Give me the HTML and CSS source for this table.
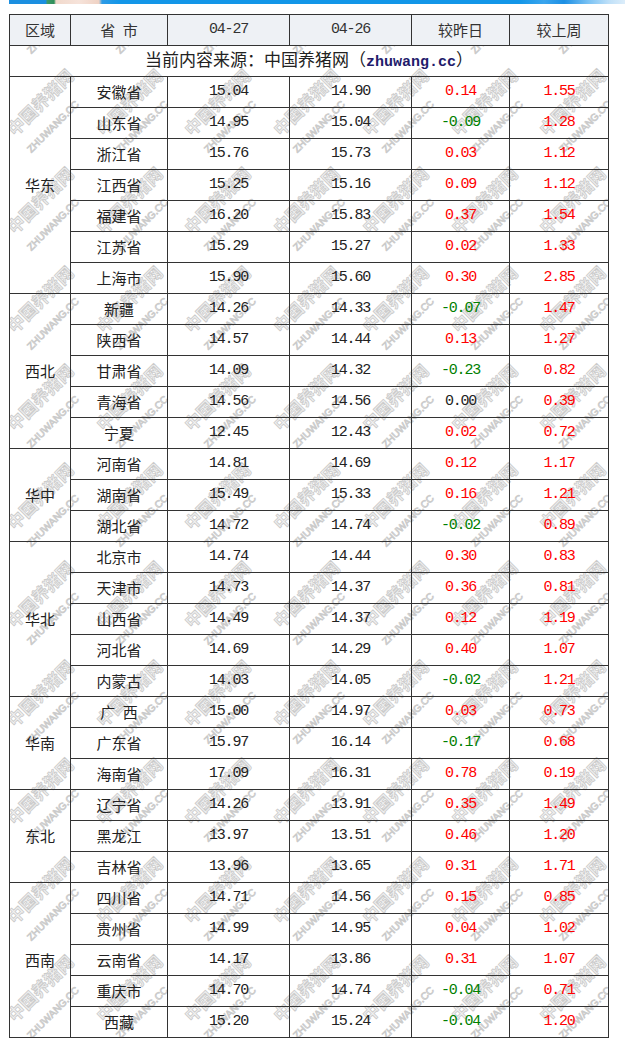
FILE: index.html
```html
<!DOCTYPE html>
<html lang="zh-CN">
<head>
<meta charset="utf-8">
<title>生猪价格</title>
<link rel="stylesheet" href="styles.css">
</head>
<body>
<div class="page">
  <div class="banner"></div>
  <div class="table-wrap">
    <div class="watermark" aria-hidden="true"></div>
    <table class="price-table">
      <colgroup>
        <col class="c-region"><col class="c-prov"><col class="c-num"><col class="c-num"><col class="c-chg"><col class="c-week">
      </colgroup>
      <thead>
        <tr><th>区域</th><th>省&ensp;市</th><th class="num">04-27</th><th class="num">04-26</th><th>较昨日</th><th>较上周</th></tr>
      </thead>
      <tbody>
        <tr class="source"><td colspan="6">当前内容来源：中国养猪网（<b class="site">zhuwang.cc</b>）</td></tr>

        <tr><td rowspan="7" class="region">华东</td><td>安徽省</td><td class="num">15.04</td><td class="num">14.90</td><td class="num up">0.14</td><td class="num up">1.55</td></tr>
        <tr><td>山东省</td><td class="num">14.95</td><td class="num">15.04</td><td class="num down">-0.09</td><td class="num up">1.28</td></tr>
        <tr><td>浙江省</td><td class="num">15.76</td><td class="num">15.73</td><td class="num up">0.03</td><td class="num up">1.12</td></tr>
        <tr><td>江西省</td><td class="num">15.25</td><td class="num">15.16</td><td class="num up">0.09</td><td class="num up">1.12</td></tr>
        <tr><td>福建省</td><td class="num">16.20</td><td class="num">15.83</td><td class="num up">0.37</td><td class="num up">1.54</td></tr>
        <tr><td>江苏省</td><td class="num">15.29</td><td class="num">15.27</td><td class="num up">0.02</td><td class="num up">1.33</td></tr>
        <tr><td>上海市</td><td class="num">15.90</td><td class="num">15.60</td><td class="num up">0.30</td><td class="num up">2.85</td></tr>

        <tr><td rowspan="5" class="region">西北</td><td>新疆</td><td class="num">14.26</td><td class="num">14.33</td><td class="num down">-0.07</td><td class="num up">1.47</td></tr>
        <tr><td>陕西省</td><td class="num">14.57</td><td class="num">14.44</td><td class="num up">0.13</td><td class="num up">1.27</td></tr>
        <tr><td>甘肃省</td><td class="num">14.09</td><td class="num">14.32</td><td class="num down">-0.23</td><td class="num up">0.82</td></tr>
        <tr><td>青海省</td><td class="num">14.56</td><td class="num">14.56</td><td class="num">0.00</td><td class="num up">0.39</td></tr>
        <tr><td>宁夏</td><td class="num">12.45</td><td class="num">12.43</td><td class="num up">0.02</td><td class="num up">0.72</td></tr>

        <tr><td rowspan="3" class="region">华中</td><td>河南省</td><td class="num">14.81</td><td class="num">14.69</td><td class="num up">0.12</td><td class="num up">1.17</td></tr>
        <tr><td>湖南省</td><td class="num">15.49</td><td class="num">15.33</td><td class="num up">0.16</td><td class="num up">1.21</td></tr>
        <tr><td>湖北省</td><td class="num">14.72</td><td class="num">14.74</td><td class="num down">-0.02</td><td class="num up">0.89</td></tr>

        <tr><td rowspan="5" class="region">华北</td><td>北京市</td><td class="num">14.74</td><td class="num">14.44</td><td class="num up">0.30</td><td class="num up">0.83</td></tr>
        <tr><td>天津市</td><td class="num">14.73</td><td class="num">14.37</td><td class="num up">0.36</td><td class="num up">0.81</td></tr>
        <tr><td>山西省</td><td class="num">14.49</td><td class="num">14.37</td><td class="num up">0.12</td><td class="num up">1.19</td></tr>
        <tr><td>河北省</td><td class="num">14.69</td><td class="num">14.29</td><td class="num up">0.40</td><td class="num up">1.07</td></tr>
        <tr><td>内蒙古</td><td class="num">14.03</td><td class="num">14.05</td><td class="num down">-0.02</td><td class="num up">1.21</td></tr>

        <tr><td rowspan="3" class="region">华南</td><td>广&ensp;西</td><td class="num">15.00</td><td class="num">14.97</td><td class="num up">0.03</td><td class="num up">0.73</td></tr>
        <tr><td>广东省</td><td class="num">15.97</td><td class="num">16.14</td><td class="num down">-0.17</td><td class="num up">0.68</td></tr>
        <tr><td>海南省</td><td class="num">17.09</td><td class="num">16.31</td><td class="num up">0.78</td><td class="num up">0.19</td></tr>

        <tr><td rowspan="3" class="region">东北</td><td>辽宁省</td><td class="num">14.26</td><td class="num">13.91</td><td class="num up">0.35</td><td class="num up">1.49</td></tr>
        <tr><td>黑龙江</td><td class="num">13.97</td><td class="num">13.51</td><td class="num up">0.46</td><td class="num up">1.20</td></tr>
        <tr><td>吉林省</td><td class="num">13.96</td><td class="num">13.65</td><td class="num up">0.31</td><td class="num up">1.71</td></tr>

        <tr><td rowspan="5" class="region">西南</td><td>四川省</td><td class="num">14.71</td><td class="num">14.56</td><td class="num up">0.15</td><td class="num up">0.85</td></tr>
        <tr><td>贵州省</td><td class="num">14.99</td><td class="num">14.95</td><td class="num up">0.04</td><td class="num up">1.02</td></tr>
        <tr><td>云南省</td><td class="num">14.17</td><td class="num">13.86</td><td class="num up">0.31</td><td class="num up">1.07</td></tr>
        <tr><td>重庆市</td><td class="num">14.70</td><td class="num">14.74</td><td class="num down">-0.04</td><td class="num up">0.71</td></tr>
        <tr><td>西藏</td><td class="num">15.20</td><td class="num">15.24</td><td class="num down">-0.04</td><td class="num up">1.20</td></tr>
      </tbody>
    </table>
  </div>
</div>
<script src="script.js"></script>
</body>
</html>
```

FILE: styles.css
```css
* { box-sizing: border-box; }

body {
  margin: 0;
  background: #fff;
  color: #222;
  font-family: "Noto Sans CJK SC", "Noto Sans", sans-serif;
}

.page {
  padding-left: 9px;
}

.banner {
  height: 4px;
  margin-bottom: 10px;
  background: linear-gradient(to right,
    #1b8fe0 0, #1b8fe0 37px,
    #3f9a6a 38px, #2f8f5a 45px,
    #f1d9cc 47px, #f6e3da 70px, #efd2c4 90px,
    #2d9be6 93px, #1396e8 110px,
    #1296e8 510px, #3aa5ee 535px, #1c8fe4 555px,
    #7cc3f4 580px, #bfe0f8 600px, #dcedfa 616px);
}

.table-wrap {
  position: relative;
  width: 600px;
}

.watermark {
  position: absolute;
  left: 0;
  top: 0;
  width: 600px;
  height: 100%;
  overflow: hidden;
  z-index: 0;
  pointer-events: none;
}

.wm {
  position: absolute;
  width: 110px;
  height: 46px;
  transform: rotate(-45deg);
  transform-origin: 0 0;
  white-space: nowrap;
  color: #f2f2f2;
  -webkit-text-stroke: 0.8px #cbcbcb;
}

.wm-cn {
  display: block;
  font-family: "Noto Sans CJK SC", sans-serif;
  font-weight: 700;
  font-size: 17px;
  line-height: 20px;
}

.wm-en {
  display: block;
  margin-top: 11px;
  font-family: "Liberation Sans", sans-serif;
  font-size: 10px;
  line-height: 12px;
}

.price-table {
  position: relative;
  z-index: 1;
  width: 600px;
  table-layout: fixed;
  border-collapse: separate;
  border-spacing: 0;
  border-top: 1px solid #333;
  border-left: 1px solid #333;
  font-size: 15px;
}

.c-region { width: 61px; }
.c-prov { width: 97px; }
.c-num { width: 122px; }
.c-chg { width: 98px; }
.c-week { width: 99px; }

.price-table tr {
  height: 31px;
}

.price-table th,
.price-table td {
  padding: 0;
  border-right: 1px solid #333;
  border-bottom: 1px solid #333;
  text-align: center;
  vertical-align: middle;
  font-weight: normal;
  line-height: 20px;
}

.price-table th {
  background: #eef1f5;
  color: #333;
}

.num {
  font-family: "Liberation Mono", monospace;
  font-size: 15px;
  letter-spacing: -1.2px;
}

.up { color: #ff0000; }
.down { color: #008000; }

.source td {
  font-size: 17px;
}

.site {
  font-family: "Liberation Mono", monospace;
  font-weight: 700;
  font-size: 15px;
  color: #1f1b6b;
}
```

FILE: script.js
```js
(function () {
  var layer = document.querySelector('.watermark');
  if (!layer) return;
  var html = '';
  for (var i = -1; i < 8; i++) {
    for (var j = -5; j < 8; j++) {
      var x = Math.round(15 + 88.7 * i - 21);
      var y = Math.round(432 + 98.5 * j - 26);
      html += '<div class="wm" style="left:' + x + 'px;top:' + y + 'px">' +
        '<span class="wm-cn">中国养猪网</span>' +
        '<span class="wm-en">ZHUWANG.CC</span></div>';
    }
  }
  layer.innerHTML = html;
})();
```
